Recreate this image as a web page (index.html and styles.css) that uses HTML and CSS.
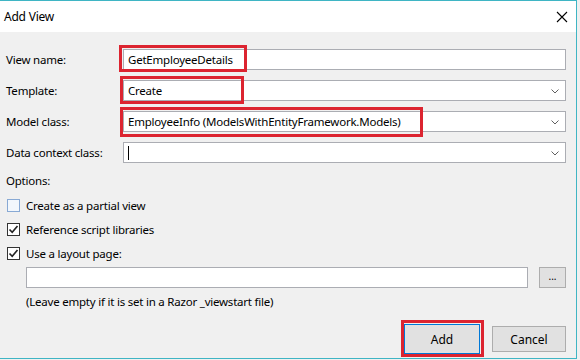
FILE: index.html
```html
<!DOCTYPE html>
<html lang="en">
<head>
    <meta charset="UTF-8">
    <title>Add View</title>
    <link rel="stylesheet" href="styles.css">
</head>
<body>

    <!-- Add View dialog -->
    <div class="dialog">
        <div class="titlebar">
            <span class="title">Add View</span>
            <svg class="close" width="12" height="12" viewBox="0 0 12 12">
                <path d="M1 1 L11 11 M11 1 L1 11" stroke="#000" stroke-width="1.1" fill="none"/>
            </svg>
        </div>

        <div class="content">
            <div class="row">
                <label class="label">View name:</label>
                <div class="field-wrap">
                    <div class="field">GetEmployeeDetails</div>
                    <span class="mark mark-name"></span>
                </div>
            </div>

            <div class="row">
                <label class="label">Template:</label>
                <div class="field-wrap">
                    <div class="field select">Create
                        <svg class="chevron" width="8" height="5" viewBox="0 0 8 5"><path d="M0.5 0.5 L4 4 L7.5 0.5" stroke="#606060" fill="none"/></svg>
                    </div>
                    <span class="mark mark-template"></span>
                </div>
            </div>

            <div class="row">
                <label class="label">Model class:</label>
                <div class="field-wrap">
                    <div class="field select">EmployeeInfo (ModelsWithEntityFramework.Models)
                        <svg class="chevron" width="8" height="5" viewBox="0 0 8 5"><path d="M0.5 0.5 L4 4 L7.5 0.5" stroke="#606060" fill="none"/></svg>
                    </div>
                    <span class="mark mark-model"></span>
                </div>
            </div>

            <div class="row">
                <label class="label">Data context class:</label>
                <div class="field-wrap">
                    <div class="field select"><span class="caret"></span>
                        <svg class="chevron" width="8" height="5" viewBox="0 0 8 5"><path d="M0.5 0.5 L4 4 L7.5 0.5" stroke="#606060" fill="none"/></svg>
                    </div>
                </div>
            </div>

            <div class="options">Options:</div>

            <div class="check-row first">
                <span class="box box-empty"></span>
                <span>Create as a partial view</span>
            </div>
            <div class="check-row">
                <span class="box">
                    <svg width="11" height="11" viewBox="0 0 11 11"><path d="M1.5 5.5 L4.2 8.3 L9.5 2" stroke="#222" stroke-width="1.6" fill="none"/></svg>
                </span>
                <span>Reference script libraries</span>
            </div>
            <div class="check-row">
                <span class="box">
                    <svg width="11" height="11" viewBox="0 0 11 11"><path d="M1.5 5.5 L4.2 8.3 L9.5 2" stroke="#222" stroke-width="1.6" fill="none"/></svg>
                </span>
                <span>Use a layout page:</span>
            </div>

            <div class="layout-row">
                <div class="field"></div>
                <button class="browse">...</button>
            </div>
            <div class="hint">(Leave empty if it is set in a Razor _viewstart file)</div>

            <div class="buttons">
                <div class="btn-wrap">
                    <button class="btn btn-default">Add</button>
                    <span class="mark mark-add"></span>
                </div>
                <button class="btn">Cancel</button>
            </div>
        </div>
    </div>

</body>
</html>
```

FILE: styles.css
```css
body {
    margin: 0;
    background-color: #f0f0f0;
    font-family: "Segoe UI", "Noto Sans", sans-serif;
    font-size: 11.5px;
    letter-spacing: -0.22px;
    color: #000;
}

.dialog {
    width: 577px;
    height: 359px;
    box-sizing: border-box;
    border: 1px solid #3fb5c4;
    border-left: none;
    background-color: #f0f0f0;
    display: flex;
    flex-direction: column;
}

.titlebar {
    height: 31px;
    background-color: #fff;
    display: flex;
    align-items: center;
    justify-content: space-between;
    padding: 0 8px 0 4px;
    flex-shrink: 0;
}

.title {
    font-size: 12px;
}

.content {
    flex: 1;
    display: flex;
    flex-direction: column;
    padding: 17px 10px 4px 6px;
}

.row {
    display: flex;
    align-items: center;
    height: 21px;
    margin-bottom: 10px;
}

.label {
    width: 117px;
    flex-shrink: 0;
}

.field-wrap {
    flex: 1;
    position: relative;
    height: 21px;
}

.field {
    height: 21px;
    box-sizing: border-box;
    border: 1px solid #abadb3;
    background-color: #fff;
    padding-left: 4px;
    display: flex;
    align-items: center;
    position: relative;
}

.chevron {
    position: absolute;
    right: 6px;
    top: 8px;
}

.caret {
    width: 1px;
    height: 14px;
    background-color: #000;
}

/* red annotation boxes */
.mark {
    position: absolute;
    border: 3px solid #dc2430;
    box-sizing: border-box;
    pointer-events: none;
}

.mark-name {
    left: -4px;
    top: -4px;
    width: 128px;
    height: 27px;
}

.mark-template {
    left: -3px;
    top: -4px;
    width: 124px;
    height: 28px;
}

.mark-model {
    left: -3px;
    top: -4px;
    width: 303px;
    height: 30px;
}

.mark-add {
    left: -3px;
    top: -4px;
    width: 83px;
    height: 37px;
}

.options {
    height: 16px;
    line-height: 16px;
}

.check-row {
    display: flex;
    align-items: center;
    height: 16px;
    margin-top: 8px;
}

.check-row:last-of-type {
    margin-top: 9px;
}

.box {
    width: 13px;
    height: 13px;
    box-sizing: border-box;
    border: 1px solid #333;
    background-color: #fff;
    margin: 0 6px 0 1px;
    display: flex;
    align-items: center;
    justify-content: center;
}

.box-empty {
    border-color: #88a9d4;
    background-color: #f2f7fc;
}

.layout-row {
    display: flex;
    margin: 6px 0 0 20px;
    gap: 11px;
}

.layout-row .field {
    flex: 1;
}

.browse {
    width: 27px;
    height: 21px;
    border: 1px solid #adadad;
    background-color: #e1e1e1;
    font-family: inherit;
    font-size: 10px;
    padding: 0 0 4px;
    line-height: 1;
}

.hint {
    margin: 6px 0 0 20px;
    height: 16px;
    line-height: 16px;
}

.buttons {
    margin-top: auto;
    display: flex;
    justify-content: flex-end;
    align-items: center;
    gap: 12px;
}

.btn-wrap {
    position: relative;
    height: 30px;
}

.btn {
    width: 74px;
    height: 26px;
    border: 1px solid #adadad;
    background-color: #e1e1e1;
    font-family: inherit;
    font-size: 12px;
    padding: 0;
}

.btn-default {
    width: 76px;
    height: 30px;
    border: 1px solid #0078d7;
    box-shadow: inset 0 0 0 1px #e1e1e1;
}
```
